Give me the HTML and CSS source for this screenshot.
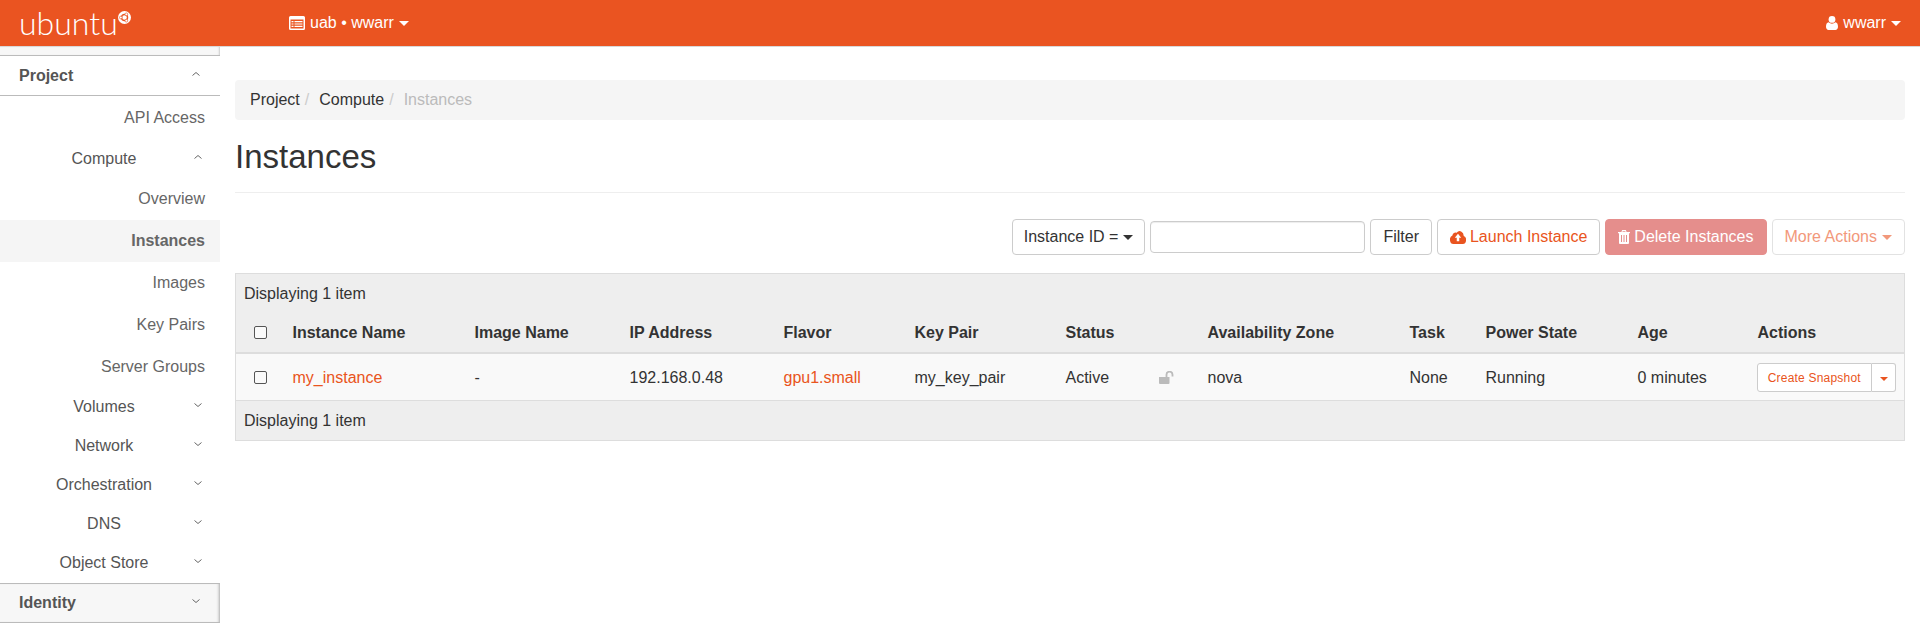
FILE: index.html
```html
<!DOCTYPE html>
<html lang="en">
<head>
 <meta charset="UTF-8">
 <title>Instances</title>
 <link rel="stylesheet" href="styles.css">
</head>
<body>
 <header class="navbar">
  <a class="brand">
   <span class="brand-text">ubuntu</span>
   <svg class="brand-mark" viewBox="0 0 24 24" width="13" height="13">
    <circle cx="12" cy="12" r="12" fill="#fff"/>
    <circle cx="12" cy="12" r="5.6" fill="none" stroke="#ea5421" stroke-width="2.6"/>
    <circle cx="5.2" cy="12" r="2.5" fill="#fff" stroke="#ea5421" stroke-width="1.2"/>
    <circle cx="15.4" cy="6.1" r="2.5" fill="#fff" stroke="#ea5421" stroke-width="1.2"/>
    <circle cx="15.4" cy="17.9" r="2.5" fill="#fff" stroke="#ea5421" stroke-width="1.2"/>
   </svg>
  </a>
  <a class="nav-project">
   <svg class="nav-icon" viewBox="0 0 16 14" width="16" height="14">
    <path fill="#fff" fill-rule="evenodd" d="M1.5 0h13A1.5 1.5 0 0 1 16 1.5v11a1.5 1.5 0 0 1-1.5 1.5h-13A1.5 1.5 0 0 1 0 12.5v-11A1.5 1.5 0 0 1 1.5 0zM1.5 3.5v9h13v-9zM2.5 5h2v1.2h-2zM5.5 5h8v1.2h-8zM2.5 7.400h2v1.2h-2zM5.500 7.400h8v1.2h-8zM2.500 9.800h2V11h-2zM5.500 9.800h8V11h-8z"/>
   </svg>
   <span>uab • wwarr</span> <span class="caret"></span>
  </a>
  <a class="nav-user">
   <svg class="nav-icon" viewBox="0 0 12 14" width="12" height="14">
    <circle cx="6" cy="3.400" r="3.400" fill="#fff"/>
    <path fill="#fff" d="M2.600 6.300C3.500 7.200 4.700 7.700 6 7.700s2.500-.5 3.400-1.400c1.700.2 2.600 1.700 2.600 4.500 0 1.900-1.100 3.200-2.600 3.200H2.600C1.100 14 0 12.700 0 10.800 0 8 .9 6.500 2.600 6.300z"/>
   </svg>
   <span>wwarr</span> <span class="caret"></span>
  </a>
 </header>

 <div class="layout">
  <nav class="sidebar">
   <div class="side-stub"></div>
   <div class="side-head side-head-open">
    <span class="side-label">Project</span>
    <svg class="chev" viewBox="0 0 10 6" width="10" height="6"><path d="M1.500 4.500 5 1.500l3.500 3" fill="none" stroke="#666" stroke-width="1"/></svg>
   </div>
   <a class="side-leaf side-leaf-first">API Access</a>
   <div class="side-group"><span class="group-label">Compute</span>
    <svg class="chev" viewBox="0 0 10 6" width="10" height="6"><path d="M1.500 4.500 5 1.500l3.500 3" fill="none" stroke="#666" stroke-width="1"/></svg>
   </div>
   <a class="side-leaf">Overview</a>
   <a class="side-leaf side-active">Instances</a>
   <a class="side-leaf">Images</a>
   <a class="side-leaf">Key Pairs</a>
   <a class="side-leaf">Server Groups</a>
   <div class="side-group"><span class="group-label">Volumes</span>
    <svg class="chev" viewBox="0 0 10 6" width="10" height="6"><path d="M1.500 1.500 5 4.500l3.500-3" fill="none" stroke="#666" stroke-width="1"/></svg>
   </div>
   <div class="side-group"><span class="group-label">Network</span>
    <svg class="chev" viewBox="0 0 10 6" width="10" height="6"><path d="M1.500 1.500 5 4.500l3.500-3" fill="none" stroke="#666" stroke-width="1"/></svg>
   </div>
   <div class="side-group"><span class="group-label">Orchestration</span>
    <svg class="chev" viewBox="0 0 10 6" width="10" height="6"><path d="M1.500 1.500 5 4.500l3.500-3" fill="none" stroke="#666" stroke-width="1"/></svg>
   </div>
   <div class="side-group"><span class="group-label">DNS</span>
    <svg class="chev" viewBox="0 0 10 6" width="10" height="6"><path d="M1.500 1.500 5 4.500l3.500-3" fill="none" stroke="#666" stroke-width="1"/></svg>
   </div>
   <div class="side-group"><span class="group-label">Object Store</span>
    <svg class="chev" viewBox="0 0 10 6" width="10" height="6"><path d="M1.500 1.500 5 4.500l3.500-3" fill="none" stroke="#666" stroke-width="1"/></svg>
   </div>
   <div class="side-head side-head-closed">
    <span class="side-label">Identity</span>
    <svg class="chev" viewBox="0 0 10 6" width="10" height="6"><path d="M1.500 1.500 5 4.500l3.500-3" fill="none" stroke="#666" stroke-width="1"/></svg>
   </div>
  </nav>

  <main class="content">
   <ol class="breadcrumb">
    <li>Project</li>
    <li class="sep">/</li>
    <li>Compute</li>
    <li class="sep">/</li>
    <li class="crumb-current">Instances</li>
   </ol>
   <h1 class="page-title">Instances</h1>

   <div class="toolbar">
    <button class="btn btn-filter-field">Instance ID =<span class="caret caret-dark"></span></button>
    <input class="filter-input" type="text">
    <button class="btn">Filter</button>
    <button class="btn btn-link-orange">
     <svg class="btn-icon" viewBox="0 0 18 13" width="16" height="14" preserveAspectRatio="none">
      <path fill="#e95420" fill-rule="evenodd" d="M4 13A4 4 0 0 1 2.700 5.200 3.400 3.400 0 0 1 7.500 2.600 4.600 4.600 0 0 1 15.500 5.600 3.800 3.800 0 0 1 14.500 13zM9 3.500 5.400 7.200h2.200v3.300h2.800V7.200h2.200z"/>
     </svg>
     Launch Instance
    </button>
    <button class="btn btn-delete">
     <svg class="btn-icon" viewBox="0 0 12 14" width="12" height="14">
      <path fill="#fff" fill-rule="evenodd" d="M4.200 0h3.600l.8 2H12v1.200h-1V13a1 1 0 0 1-1 1H2a1 1 0 0 1-1-1V3.200H0V2h3.400zM4.700 1.200 4.400 2h3.200l-.3-.8zM3 5v7h1V5zM5.500 5v7h1V5zM8 5v7h1V5z"/>
     </svg>
     Delete Instances
    </button>
    <button class="btn btn-more">More Actions<span class="caret"></span></button>
   </div>

   <table class="instances">
    <colgroup>
     <col class="c-check"><col class="c-name"><col class="c-image"><col class="c-ip"><col class="c-flavor"><col class="c-key"><col class="c-status"><col class="c-lock"><col class="c-zone"><col class="c-task"><col class="c-power"><col class="c-age"><col class="c-actions">
    </colgroup>
    <thead>
     <tr class="summary-row"><th colspan="13">Displaying 1 item</th></tr>
     <tr class="column-row">
      <th><span class="check"></span></th>
      <th>Instance Name</th>
      <th>Image Name</th>
      <th>IP Address</th>
      <th>Flavor</th>
      <th>Key Pair</th>
      <th>Status</th>
      <th></th>
      <th>Availability Zone</th>
      <th>Task</th>
      <th>Power State</th>
      <th>Age</th>
      <th>Actions</th>
     </tr>
    </thead>
    <tbody>
     <tr>
      <td><span class="check"></span></td>
      <td><a class="link">my_instance</a></td>
      <td>-</td>
      <td>192.168.0.48</td>
      <td><a class="link">gpu1.small</a></td>
      <td>my_key_pair</td>
      <td>Active</td>
      <td>
       <svg class="lock" viewBox="0 0 16 13" width="16" height="13">
        <path fill="#bbb" d="M0 6h10.500v6a1 1 0 0 1-1 1H1a1 1 0 0 1-1-1z"/>
        <path fill="none" stroke="#bbb" stroke-width="1.800" d="M7.500 6V3.800a3 3 0 0 1 6-.2V5.500"/>
       </svg>
      </td>
      <td>nova</td>
      <td>None</td>
      <td>Running</td>
      <td>0 minutes</td>
      <td>
       <div class="row-actions">
        <button class="row-btn">Create Snapshot</button>
        <button class="row-toggle"><span class="caret caret-orange"></span></button>
       </div>
      </td>
     </tr>
    </tbody>
    <tfoot>
     <tr class="summary-row"><td colspan="13">Displaying 1 item</td></tr>
    </tfoot>
   </table>
  </main>
 </div>
</body>
</html>
```

FILE: styles.css
```css
* {
 box-sizing: border-box;
}
html, body {
 height: 100%;
}
body {
 margin: 0;
 overflow: hidden;
 font-family: "Liberation Sans", Arial, sans-serif;
 font-size: 16px;
 line-height: 22px;
 color: #333;
 background: #fff;
}
.caret {
 display: inline-block;
 width: 0;
 height: 0;
 margin-left: 5px;
 vertical-align: middle;
 border-top: 5px solid #fff;
 border-left: 5px solid transparent;
 border-right: 5px solid transparent;
}
.caret-dark {
 border-top-color: #333;
}
.caret-orange {
 margin: 0;
 border-top: 4px solid #e95420;
 border-left: 4px solid transparent;
 border-right: 4px solid transparent;
}

/* top bar */
.navbar {
 display: flex;
 align-items: center;
 height: 47px;
 background: #ea5421;
 border-bottom: 1px solid #d8d8d8;
 color: #fff;
 padding-right: 19px;
}
.brand {
 display: flex;
 align-items: flex-start;
 width: 289px;
 padding-left: 19px;
}
.brand-text {
 font-family: "Lato", sans-serif;
 font-weight: 300;
 font-size: 32px;
 line-height: 42px;
}
.brand-mark {
 margin: 9px 0 0;
}
.nav-project {
 display: flex;
 align-items: center;
 gap: 5px;
}
.nav-user {
 display: flex;
 align-items: center;
 gap: 5px;
 margin-left: auto;
}
.navbar .caret {
 margin-left: 0;
}

/* sidebar */
.layout {
 display: flex;
 height: 581px;
}
.sidebar {
 flex: 0 0 220px;
 color: #555;
}
.side-stub {
 height: 9px;
 background: #f7f7f7;
 border-bottom: 1px solid #bbb;
 box-shadow: inset -2px 0 2px -1px #ccc;
}
.side-head {
 display: flex;
 align-items: center;
 height: 40px;
 padding-left: 19px;
}
.side-label {
 flex: 0 0 189px;
 font-weight: bold;
}
.side-head-open {
 border-bottom: 1px solid #bbb;
}
.side-head-closed {
 background: #f7f7f7;
 border-top: 1px solid #bbb;
 border-bottom: 1px solid #bbb;
 box-shadow: inset -3px 0 3px -2px #aaa;
}
.side-head .chev {
 margin-left: -17px;
 margin-top: -4px;
}
.side-leaf {
 display: block;
 height: 42px;
 line-height: 42px;
 padding-right: 15px;
 text-align: right;
 color: #666;
}
.side-leaf-first {
 height: 43px;
 line-height: 44px;
}
.side-leaf-first + .side-group {
 padding-bottom: 0;
}
.side-active {
 background: #f5f5f5;
 font-weight: bold;
}
.side-group {
 display: flex;
 align-items: center;
 height: 39px;
 padding-bottom: 1px;
}
.group-label {
 flex: 0 0 208px;
 text-align: center;
}
.side-group .chev {
 margin-left: -15px;
 margin-top: -4px;
}

/* main */
.content {
 flex: 1;
 min-width: 0;
 padding: 33px 15px 0;
}
.breadcrumb {
 display: flex;
 gap: 5px;
 height: 40px;
 margin: 0;
 padding: 9px 15px;
 list-style: none;
 background: #f5f5f5;
 border-radius: 4px;
}
.breadcrumb .sep {
 color: #ccc;
 margin-right: 5px;
}
.crumb-current {
 color: #bbb;
}
.page-title {
 margin: 0 0 26px;
 padding: 19px 0 17px;
 font-size: 33px;
 line-height: 36px;
 font-weight: 400;
 border-bottom: 1px solid #eee;
}
.toolbar {
 display: flex;
 justify-content: flex-end;
 align-items: center;
 gap: 5px;
 margin-bottom: 18px;
}
.btn {
 height: 36px;
 padding: 0 12px;
 font: inherit;
 color: #333;
 background: #fff;
 border: 1px solid #ccc;
 border-radius: 4px;
}
.btn-filter-field {
 padding: 0 11px;
}
.filter-input {
 width: 215px;
 height: 32px;
 border: 1px solid #ccc;
 border-radius: 4px;
 box-shadow: inset 0 1px 1px rgba(0,0,0,.075);
}
.btn-link-orange {
 padding: 0 11.5px;
 color: #e95420;
}
.btn-icon {
 vertical-align: -2px;
}
.btn-delete {
 color: #fff;
 background: #e58e8c;
 border-color: #e58e8c;
}
.btn-more {
 color: #f2987b;
 border-color: #e2e2e2;
}
.btn-more .caret {
 border-top-color: #f2987b;
}

/* table */
.instances {
 width: 100%;
 table-layout: fixed;
 border-collapse: collapse;
 border: 1px solid #ddd;
}
.c-check { width: 49px; }
.c-name { width: 182px; }
.c-image { width: 155px; }
.c-ip { width: 154px; }
.c-flavor { width: 131px; }
.c-key { width: 151px; }
.c-status { width: 93px; }
.c-lock { width: 49px; }
.c-zone { width: 202px; }
.c-task { width: 76px; }
.c-power { width: 152px; }
.c-age { width: 120px; }
.instances th,
.instances td {
 padding: 0 8px;
 text-align: left;
}
.instances thead,
.instances tfoot {
 background: #eee;
}
.summary-row th,
.summary-row td {
 font-weight: 400;
 height: 40px;
}
.column-row th {
 height: 39px;
 vertical-align: top;
 padding-top: 8px;
 border-bottom: 2px solid #ddd;
}
.column-row .check {
 margin-top: 4px;
}
.instances tbody tr {
 background: #f9f9f9;
 border-bottom: 1px solid #ddd;
}
.instances tbody td {
 height: 48px;
 padding-top: 2px;
}
.check {
 display: block;
 width: 13px;
 height: 13px;
 margin-left: 10px;
 border: 1px solid #555;
 border-radius: 2px;
 background: #fafafa;
}
.link {
 color: #e95420;
}
.lock {
 display: block;
}
.row-actions {
 display: flex;
 height: 29px;
 margin-left: -1px;
}
.row-btn,
.row-toggle {
 height: 29px;
 font-family: inherit;
 background: #fff;
 border: 1px solid #ccc;
}
.row-btn {
 width: 116px;
 padding: 0;
 font-size: 12px;
 letter-spacing: .2px;
 color: #e95420;
 border-radius: 3px 0 0 3px;
}
.row-toggle {
 width: 24px;
 padding: 0;
 border-left: 0;
 border-radius: 0 3px 3px 0;
}
```
